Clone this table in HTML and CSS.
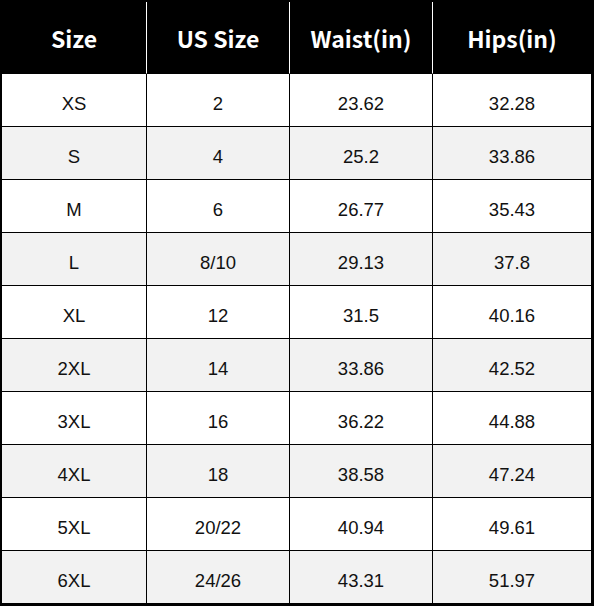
FILE: index.html
```html
<!DOCTYPE html>
<html>
<head>
<meta charset="utf-8">
<link rel="stylesheet" href="styles.css">
</head>
<body>
<table class="size-table">
  <colgroup>
    <col class="c1"><col class="c2"><col class="c3"><col class="c4">
  </colgroup>
  <thead>
    <tr><th>Size</th><th>US Size</th><th>Waist(in)</th><th>Hips(in)</th></tr>
  </thead>
  <tbody>
    <tr><td>XS</td><td>2</td><td>23.62</td><td>32.28</td></tr>
    <tr><td>S</td><td>4</td><td>25.2</td><td>33.86</td></tr>
    <tr><td>M</td><td>6</td><td>26.77</td><td>35.43</td></tr>
    <tr><td>L</td><td>8/10</td><td>29.13</td><td>37.8</td></tr>
    <tr><td>XL</td><td>12</td><td>31.5</td><td>40.16</td></tr>
    <tr><td>2XL</td><td>14</td><td>33.86</td><td>42.52</td></tr>
    <tr><td>3XL</td><td>16</td><td>36.22</td><td>44.88</td></tr>
    <tr><td>4XL</td><td>18</td><td>38.58</td><td>47.24</td></tr>
    <tr><td>5XL</td><td>20/22</td><td>40.94</td><td>49.61</td></tr>
    <tr><td>6XL</td><td>24/26</td><td>43.31</td><td>51.97</td></tr>
  </tbody>
</table>
</body>
</html>
```
FILE: styles.css
```css
html, body {
  margin: 0;
  padding: 0;
  background: #ffffff;
}
.size-table {
  border-collapse: separate;
  border-spacing: 0;
  width: 594px;
  table-layout: fixed;
  border-top: 2px solid #000;
  border-left: 2px solid #000;
  border-bottom: 3px solid #000;
  font-family: "Liberation Sans", Arial, sans-serif;
}
.c1 { width: 145px; }
.c2 { width: 143px; }
.c3 { width: 143px; }
.c4 { width: 161px; }
.size-table th,
.size-table td {
  box-sizing: border-box;
  padding: 0;
  text-align: center;
  vertical-align: middle;
}
.size-table th {
  background: #000;
  color: #fff;
  font-family: "Noto Sans CJK KR", "Noto Sans", sans-serif;
  font-weight: 700;
  font-size: 23px;
  line-height: 28px;
  height: 72px;
  border-right: 1px solid #fff;
  border-bottom: 1px solid #000;
}
.size-table th:last-child { border-right: 3px solid #000; }
.size-table td {
  height: 53px;
  padding-top: 7px;
  font-size: 18.5px;
  line-height: 22px;
  color: #111;
  border-right: 1px solid #000;
  border-bottom: 1px solid #000;
}
.size-table td:last-child { border-right: 3px solid #000; }
.size-table tbody tr:last-child td { border-bottom: 0; height: 52px; }
.size-table tbody tr:nth-child(even) td {
  background: #f2f2f2;
}
```
